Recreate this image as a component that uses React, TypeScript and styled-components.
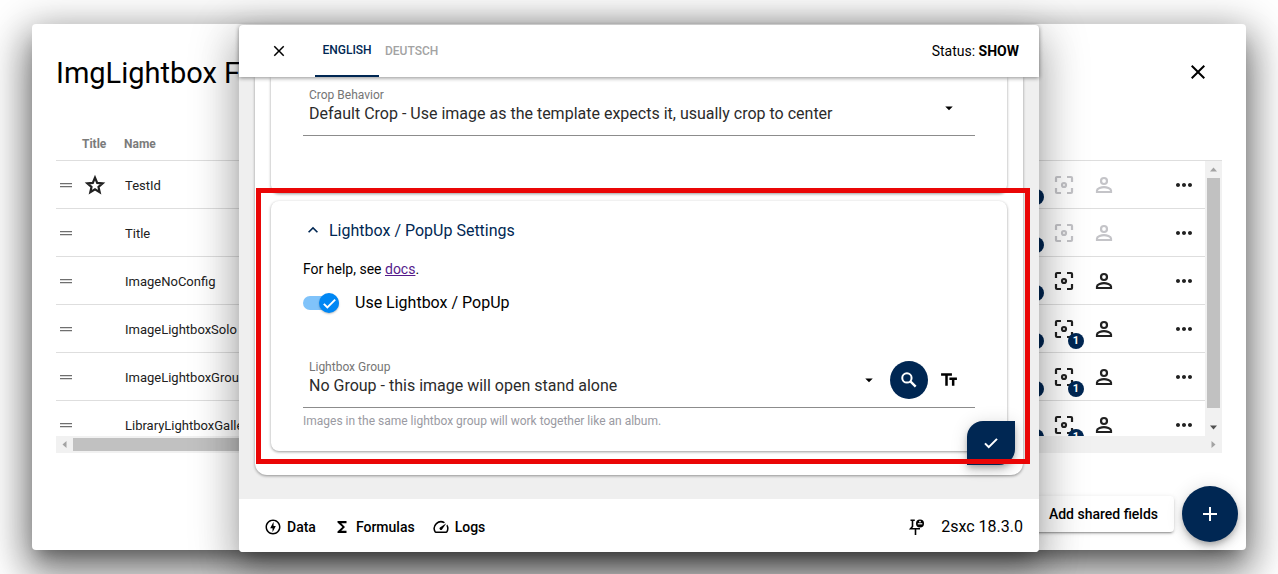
import React from "react";
import styled, { createGlobalStyle } from "styled-components";
import {
  MdArrowDropDown,
  MdClose,
  MdFunctions,
  MdKeyboardArrowUp,
  MdMoreHoriz,
  MdOutlineOfflineBolt,
  MdOutlineSpeed,
  MdAdd,
  MdTextFields,
} from "react-icons/md";

const navy = "#002753";

const Global = createGlobalStyle`
  *, *::before, *::after { box-sizing: border-box; }
  body {
    margin: 0;
    background: #fff;
    color: #000;
    font-family: Roboto, "Liberation Sans", sans-serif;
    font-size: 14px;
    overflow: hidden;
  }
  button, select, input { font: inherit; color: inherit; margin: 0; }
  svg { display: block; flex: none; }
`;

const Page = styled.div`
  position: relative;
  padding: 24px 32px;
`;

const FieldsDialog = styled.main`
  display: flex;
  flex-direction: column;
  background: #fff;
  border-radius: 4px;
  box-shadow: 0 11px 15px -7px rgba(0, 0, 0, 0.3), 0 24px 38px 3px rgba(0, 0, 0, 0.3),
    0 9px 42px 6px rgba(0, 0, 0, 0.34);
`;

const DialogHeader = styled.header`
  display: flex;
  align-items: center;
  justify-content: space-between;
  padding: 24px 24px 0;
  height: 72px;
  margin-bottom: 32px;
`;

const DialogTitle = styled.h1`
  margin: 0;
  padding-top: 2px;
  font-size: 29px;
  line-height: 48px;
  font-weight: 400;
`;

const IconButton = styled.button<{ $size?: number; $color?: string }>`
  display: flex;
  align-items: center;
  justify-content: center;
  position: relative;
  width: ${(p) => p.$size ?? 40}px;
  height: ${(p) => p.$size ?? 40}px;
  padding: 0;
  border: 0;
  background: none;
  color: ${(p) => p.$color ?? "#212121"};
  flex: none;
`;

const TableArea = styled.section`
  margin: 0 24px;
`;

const TableRow = styled.div`
  display: flex;
`;

const TableViewport = styled.div`
  flex: 1;
  min-width: 0;
  height: 308px;
  overflow: hidden;
`;

const Table = styled.table`
  width: 100%;
  border-collapse: separate;
  border-spacing: 0;
  table-layout: fixed;
`;

const HeadCell = styled.th<{ $width?: number }>`
  width: ${(p) => (p.$width ? `${p.$width}px` : "auto")};
  height: 33px;
  padding: 0;
  border-bottom: 1px solid #dedede;
  color: #7b7b7b;
  font-size: 12px;
  font-weight: 700;
  text-align: left;
`;

const Cell = styled.td`
  height: 48px;
  padding: 0;
  border-bottom: 1px solid #dedede;
  font-size: 13px;
  color: #212121;
`;

const NameCell = styled(Cell)`
  padding: 2px 0 0 1px;
`;

const Handle = styled.span`
  display: block;
  padding-left: 4px;
  color: #6f6f6f;
`;

const Actions = styled.div`
  display: flex;
  align-items: center;
  justify-content: flex-end;
  padding-right: 1px;
  height: 47px;
`;

const Spacer = styled.span`
  width: 40px;
`;

const Badge = styled.span`
  position: absolute;
  right: 0;
  bottom: 0;
  width: 16px;
  height: 16px;
  border-radius: 8px;
  background: ${navy};
  color: #fff;
  font-size: 11px;
  line-height: 16px;
  font-weight: 700;
  text-align: center;
`;

const VerticalBar = styled.div`
  display: flex;
  flex-direction: column;
  align-items: center;
  width: 17px;
  background: #f1f1f1;
`;

const BarCap = styled.div`
  width: 17px;
  height: 33px;
  background: #fff;
  border-bottom: 1px solid #dedede;
`;

const BarArrow = styled.span<{ $color: string }>`
  display: flex;
  align-items: center;
  justify-content: center;
  width: 17px;
  height: 17px;
  color: ${(p) => p.$color};
`;

const VerticalThumb = styled.div`
  width: 13px;
  height: 230px;
  background: #c1c1c1;
  margin-bottom: auto;
`;

const HorizontalBar = styled.div`
  display: flex;
  align-items: center;
  height: 17px;
  background: #f1f1f1;
`;

const HorizontalThumb = styled.div`
  width: 70%;
  height: 13px;
  margin-right: auto;
  background: #c1c1c1;
`;

const DialogActions = styled.div`
  display: flex;
  align-items: center;
  justify-content: flex-end;
  gap: 8px;
  padding: 33px 8px 8px;
`;

const SharedButton = styled.button`
  height: 36px;
  padding: 0 16px;
  border: 0;
  border-radius: 4px;
  background: #fff;
  font-weight: 500;
  box-shadow: 0 3px 1px -2px rgba(0, 0, 0, 0.2), 0 2px 2px rgba(0, 0, 0, 0.14),
    0 1px 5px rgba(0, 0, 0, 0.12);
`;

const AddButton = styled(IconButton)`
  border-radius: 50%;
  background: ${navy};
  box-shadow: 0 3px 5px -1px rgba(0, 0, 0, 0.2), 0 6px 10px rgba(0, 0, 0, 0.14),
    0 1px 18px rgba(0, 0, 0, 0.12);
`;

const Overlay = styled.div`
  position: absolute;
  inset: 0;
  display: flex;
  justify-content: center;
  align-items: flex-start;
  padding-top: 25px;
`;

const EditDialog = styled.div`
  width: 800px;
  max-width: 100%;
  border-radius: 4px;
  background: #efefef;
  box-shadow: 0 11px 15px -7px rgba(0, 0, 0, 0.2), 0 24px 38px 3px rgba(0, 0, 0, 0.18),
    0 9px 46px 8px rgba(0, 0, 0, 0.18);
`;

const EditHeader = styled.header`
  position: relative;
  display: flex;
  height: 52px;
  padding: 0 20px 0 24px;
  border-radius: 4px 4px 0 0;
  background: #fff;
  box-shadow: 0 1px 4px rgba(0, 0, 0, 0.45);
  align-items: center;
`;

const Tabs = styled.nav`
  display: flex;
  flex: 1;
  height: 52px;
  margin-left: 20px;
`;

const Tab = styled.button<{ $active?: boolean }>`
  min-width: 64px;
  padding: ${(p) => (p.$active ? "0 6px" : "2px 6px 0")};
  border: 0;
  border-bottom: 2px solid ${(p) => (p.$active ? navy : "transparent")};
  background: none;
  color: ${(p) => (p.$active ? navy : "#a3a3a3")};
  font-size: 12px;
  font-weight: 500;
`;

const Status = styled.span`
  font-size: 14px;
`;

const EditBody = styled.div`
  padding: 0 16px 24px;
`;

const Sheet = styled.div`
  padding: 0 16px 24px;
  border-radius: 0 0 12px 12px;
  background: #fff;
  box-shadow: 0 1px 3px rgba(0, 0, 0, 0.4);
`;

const CropCard = styled.section`
  height: 116px;
  padding: 10px 32px 0;
  border-radius: 0 0 8px 8px;
  margin-bottom: 8px;
  box-shadow: 0 1px 3px rgba(0, 0, 0, 0.4);
`;

const LightboxCard = styled.section`
  position: relative;
  height: 250px;
  padding: 15px 32px 0;
  border-radius: 8px;
  background: #fff;
  box-shadow: 0 1px 3px rgba(0, 0, 0, 0.4);
`;

const Highlight = styled.div`
  position: absolute;
  inset: -13px -23px -13px -15px;
  border: 5px solid #ea0606;
  pointer-events: none;
`;

const Field = styled.div`
  display: flex;
  align-items: center;
  height: 49px;
  padding-bottom: 6px;
  border-bottom: 1px solid #8c8c8c;
`;

const FieldMain = styled.div`
  display: flex;
  flex: 1;
  flex-direction: column;
  align-self: flex-start;
`;

const FieldLabel = styled.label`
  padding-left: 6px;
  color: #757575;
  font-size: 12px;
  line-height: 16px;
`;

const FieldSelect = styled.select`
  height: 22px;
  padding: 0 0 0 6px;
  border: 0;
  background: transparent;
  appearance: none;
  color: #2b2b2b;
  font-size: 16px;
  line-height: 22px;
`;

const Arrow = styled.span<{ $gap: number }>`
  margin-right: ${(p) => p.$gap}px;
`;

const SearchButton = styled(IconButton)`
  border-radius: 50%;
  background: ${navy};
`;

const TextButton = styled(IconButton)`
  margin-right: 5px;
`;

const SectionTitle = styled.button`
  display: flex;
  align-items: center;
  gap: 6px;
  height: 28px;
  padding: 0;
  border: 0;
  background: none;
  color: ${navy};
  font-size: 16px;
`;

const Help = styled.p`
  margin: 15px 0 11px;
  line-height: 20px;
`;

const HelpLink = styled.a`
  color: #551a8b;
`;

const ToggleRow = styled.label`
  display: flex;
  align-items: center;
  gap: 16px;
  height: 24px;
  margin-bottom: 45px;
  font-size: 16px;
`;

const Toggle = styled.span`
  display: flex;
  align-items: center;
  justify-content: flex-end;
  width: 36px;
  height: 14px;
  margin-top: 2px;
  border-radius: 7px;
  background: #80c3fa;
`;

const ToggleInput = styled.input`
  position: absolute;
  opacity: 0;
`;

const ToggleThumb = styled.span`
  display: flex;
  align-items: center;
  justify-content: center;
  width: 20px;
  height: 20px;
  border-radius: 50%;
  background: #0087f4;
  color: #fff;
  box-shadow: 0 1px 2px rgba(0, 0, 0, 0.25);
`;

const Hint = styled.p`
  margin: 5px 0 0;
  color: #9a9aa2;
  font-size: 12px;
  line-height: 16px;
`;

const SaveButton = styled.button`
  position: absolute;
  right: -8px;
  bottom: -14px;
  display: flex;
  align-items: center;
  justify-content: center;
  width: 48px;
  height: 44px;
  padding: 0;
  border: 0;
  border-radius: 16px 0;
  background: ${navy};
  color: #fff;
  box-shadow: 0 3px 5px -1px rgba(0, 0, 0, 0.2), 0 6px 10px rgba(0, 0, 0, 0.14),
    0 1px 18px rgba(0, 0, 0, 0.12);
`;

const EditFooter = styled.footer`
  display: flex;
  align-items: center;
  gap: 17px;
  height: 53px;
  padding: 2px 16px 0 25px;
  border-radius: 0 0 4px 4px;
  background: #fff;
`;

const FooterButton = styled.button`
  display: flex;
  align-items: center;
  gap: 5px;
  padding: 0;
  border: 0;
  background: none;
  font-weight: 500;
`;

const Version = styled.span`
  font-size: 16px;
`;

const FooterEnd = styled.div`
  display: flex;
  align-items: center;
  gap: 15px;
  margin-left: auto;
`;

type LineIconProps = { size?: number; weight?: number; children: React.ReactNode };

const LineIcon = ({ size = 24, weight = 2, children }: LineIconProps) => (
  <svg
    width={size}
    height={size}
    viewBox="0 0 24 24"
    fill="none"
    stroke="currentColor"
    strokeWidth={weight}
    aria-hidden="true"
  >
    {children}
  </svg>
);

const FocusIcon = () => (
  <LineIcon weight={2.2}>
    <path d="M4 9V5q0-1 1-1h4M15 4h4q1 0 1 1v4M20 15v4q0 1-1 1h-4M9 20H5q-1 0-1-1v-4" />
    <circle cx="12" cy="12" r="2" />
  </LineIcon>
);

const PersonIcon = () => (
  <LineIcon weight={2.2}>
    <circle cx="12" cy="8" r="3" />
    <path d="M5 19v-1.500c0-2 4.500-3.400 7-3.400s7 1.400 7 3.400V19z" />
  </LineIcon>
);

const StarIcon = () => (
  <LineIcon weight={2.200}>
    <path d="M12 4.600 14.200 9.900 19.600 10.300 15.500 13.900 16.700 19.300 12 16.400 7.300 19.300 8.500 13.900 4.400 10.300 9.800 9.900z" />
  </LineIcon>
);

const CheckIcon = ({ size = 18 }: { size?: number }) => (
  <LineIcon size={size} weight={2.800}>
    <path d="M4 12.500 9 17.500 20 6.500" />
  </LineIcon>
);

const SearchIcon = () => (
  <LineIcon size={20} weight={2.400}>
    <circle cx="9.500" cy="9.500" r="5.600" />
    <path d="M13.700 13.700 20 20" strokeWidth="2.800" />
  </LineIcon>
);

const HandleIcon = () => (
  <svg width="12" height="6" viewBox="0 0 12 6" fill="currentColor" aria-hidden="true">
    <path d="M0 1h12v1.200H0zM0 4h12v1.200H0z" />
  </svg>
);

const PinIcon = () => (
  <svg width="18" height="18" viewBox="0 0 18 18" fill="none" stroke="currentColor" strokeWidth="1.6" aria-hidden="true">
    <path d="M2.500 2.300H6.800M4.500 2.300V8.500L2.600 10.700H12M7.500 10.700V17" />
    <circle cx="12" cy="5.500" r="4" fill="currentColor" stroke="none" />
    <path d="M9.800 5.800h4.500" stroke="#fff" strokeWidth="1.200" />
    <circle cx="12" cy="3.600" r="0.900" fill="#fff" stroke="none" />
  </svg>
);

const Triangle = ({ turn }: { turn: number }) => (
  <svg width="9" height="9" viewBox="0 0 9 9" fill="currentColor" aria-hidden="true">
    <path d="M1 6.500 4.500 2.500 8 6.500z" transform={`rotate(${turn} 4.5 4.5)`} />
  </svg>
);

type FieldRow = { name: string; star?: boolean; muted?: boolean; badge?: boolean };

const rows: FieldRow[] = [
  { name: "TestId", star: true, muted: true },
  { name: "Title", muted: true },
  { name: "ImageNoConfig" },
  { name: "ImageLightboxSolo", badge: true },
  { name: "ImageLightboxGroup", badge: true },
  { name: "LibraryLightboxGallery", badge: true },
];

export default function App() {
  return (
    <Page>
      <Global />
      <FieldsDialog>
        <DialogHeader>
          <DialogTitle>ImgLightbox Fields</DialogTitle>
          <IconButton $size={48} aria-label="Close fields" $color="#000">
            <MdClose size={24} />
          </IconButton>
        </DialogHeader>
        <TableArea>
          <TableRow>
            <TableViewport>
              <Table>
                <thead>
                  <tr>
                    <HeadCell $width={26} />
                    <HeadCell $width={42}>Title</HeadCell>
                    <HeadCell>Name</HeadCell>
                    <HeadCell $width={201} />
                  </tr>
                </thead>
                <tbody>
                  {rows.map((row) => {
                    const tone = row.muted ? "#c4c4c8" : "#212121";
                    return (
                      <tr key={row.name}>
                        <Cell>
                          <Handle>
                            <HandleIcon />
                          </Handle>
                        </Cell>
                        <Cell>
                          {row.star && (
                            <IconButton $size={26} aria-label="Title field">
                              <StarIcon />
                            </IconButton>
                          )}
                        </Cell>
                        <NameCell>{row.name}</NameCell>
                        <Cell>
                          <Actions>
                            <IconButton aria-label="Configure">
                              <Badge />
                            </IconButton>
                            <IconButton $color={tone} aria-label="Image configuration">
                              <FocusIcon />
                              {row.badge && <Badge>1</Badge>}
                            </IconButton>
                            <IconButton $color={tone} aria-label="Permissions">
                              <PersonIcon />
                            </IconButton>
                            <Spacer />
                            <IconButton aria-label="More">
                              <MdMoreHoriz size={24} />
                            </IconButton>
                          </Actions>
                        </Cell>
                      </tr>
                    );
                  })}
                </tbody>
              </Table>
            </TableViewport>
            <VerticalBar>
              <BarCap />
              <BarArrow $color="#a3a3a3"><Triangle turn={0} /></BarArrow>
              <VerticalThumb />
              <BarArrow $color="#505050"><Triangle turn={180} /></BarArrow>
            </VerticalBar>
          </TableRow>
          <HorizontalBar>
            <BarArrow $color="#a3a3a3"><Triangle turn={-90} /></BarArrow>
            <HorizontalThumb />
            <BarArrow $color="#a3a3a3"><Triangle turn={90} /></BarArrow>
          </HorizontalBar>
        </TableArea>
        <DialogActions>
          <SharedButton>Add shared fields</SharedButton>
          <AddButton $size={56} $color="#fff" aria-label="Add field">
            <MdAdd size={24} />
          </AddButton>
        </DialogActions>
      </FieldsDialog>

      <Overlay>
        <EditDialog role="dialog" aria-label="Edit image settings">
          <EditHeader>
            <IconButton $size={32} $color="#000" aria-label="Close">
              <MdClose size={18} />
            </IconButton>
            <Tabs>
              <Tab $active>ENGLISH</Tab>
              <Tab>DEUTSCH</Tab>
            </Tabs>
            <Status>
              Status: <b>SHOW</b>
            </Status>
          </EditHeader>
          <EditBody>
            <Sheet>
              <CropCard>
                <Field>
                  <FieldMain>
                    <FieldLabel htmlFor="crop">Crop Behavior</FieldLabel>
                    <FieldSelect id="crop">
                      <option>
                        Default Crop - Use image as the template expects it, usually crop to center
                      </option>
                    </FieldSelect>
                  </FieldMain>
                  <Arrow $gap={17}>
                    <MdArrowDropDown size={18} />
                  </Arrow>
                </Field>
              </CropCard>
              <LightboxCard>
                <SectionTitle>
                  <MdKeyboardArrowUp size={20} />
                  Lightbox / PopUp Settings
                </SectionTitle>
                <Help>
                  For help, see <HelpLink href="#docs">docs</HelpLink>.
                </Help>
                <ToggleRow>
                  <ToggleInput type="checkbox" defaultChecked />
                  <Toggle>
                    <ToggleThumb>
                      <CheckIcon size={17} />
                    </ToggleThumb>
                  </Toggle>
                  Use Lightbox / PopUp
                </ToggleRow>
                <Field>
                  <FieldMain>
                    <FieldLabel htmlFor="group">Lightbox Group</FieldLabel>
                    <FieldSelect id="group">
                      <option>No Group - this image will open stand alone</option>
                    </FieldSelect>
                  </FieldMain>
                  <Arrow $gap={12}>
                    <MdArrowDropDown size={18} />
                  </Arrow>
                  <SearchButton $size={38} $color="#fff" aria-label="Search">
                    <SearchIcon />
                  </SearchButton>
                  <TextButton $size={42} $color="#000" aria-label="Text entry">
                    <MdTextFields size={20} />
                  </TextButton>
                </Field>
                <Hint>Images in the same lightbox group will work together like an album.</Hint>
                <SaveButton aria-label="Save">
                  <CheckIcon />
                </SaveButton>
                <Highlight />
              </LightboxCard>
            </Sheet>
          </EditBody>
          <EditFooter>
            <FooterButton>
              <MdOutlineOfflineBolt size={18} />
              Data
            </FooterButton>
            <FooterButton>
              <MdFunctions size={18} />
              Formulas
            </FooterButton>
            <FooterButton>
              <MdOutlineSpeed size={18} />
              Logs
            </FooterButton>
            <FooterEnd>
              <PinIcon />
              <Version>2sxc 18.3.0</Version>
            </FooterEnd>
          </EditFooter>
        </EditDialog>
      </Overlay>
    </Page>
  );
}
